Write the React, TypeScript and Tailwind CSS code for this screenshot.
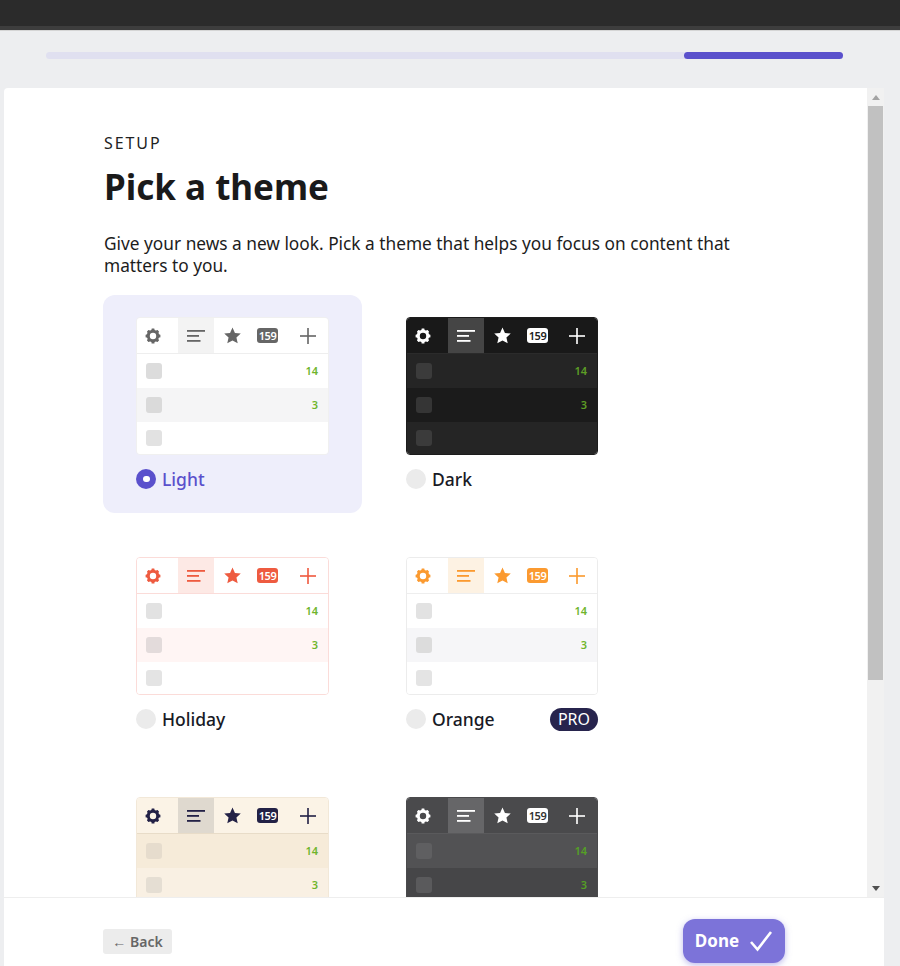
import React from "react";

type Theme = {
  name: string;
  header: string;
  tab: string;
  icon: string;
  badgeText: string;
  border: string;
  line: string;
  row1: string;
  row2: string;
  row3: string;
  cb1: string;
  cb2: string;
  cb3: string;
  green: string;
};

const themes: Theme[] = [
  { name: "Light", header: "bg-white", tab: "bg-[#f3f3f3]", icon: "#666666", badgeText: "text-white", border: "border-[#f0f0f0]", line: "border-[#eeeeee]", row1: "bg-white", row2: "bg-[#f5f5f6]", row3: "bg-white", cb1: "bg-[#dcdcdc]", cb2: "bg-[#dadada]", cb3: "bg-[#e2e2e2]", green: "text-[#6fb52c]" },
  { name: "Dark", header: "bg-[#191919]", tab: "bg-[#454545]", icon: "#ffffff", badgeText: "text-[#222222]", border: "border-[#1c1c1c]", line: "border-[#2b2b2b]", row1: "bg-[#252525]", row2: "bg-[#1b1b1b]", row3: "bg-[#252525]", cb1: "bg-[#3b3b3b]", cb2: "bg-[#353535]", cb3: "bg-[#3b3b3b]", green: "text-[#5d9e25]" },
  { name: "Holiday", header: "bg-white", tab: "bg-[#fde9e5]", icon: "#ee5b40", badgeText: "text-white", border: "border-[#fbdcd9]", line: "border-[#fbdcd9]", row1: "bg-white", row2: "bg-[#fff5f4]", row3: "bg-white", cb1: "bg-[#e2e2e2]", cb2: "bg-[#e3dbdb]", cb3: "bg-[#e4e4e4]", green: "text-[#6fb52c]" },
  { name: "Orange", header: "bg-white", tab: "bg-[#fdf2e3]", icon: "#fb9a30", badgeText: "text-white", border: "border-[#ececec]", line: "border-[#eeeeee]", row1: "bg-white", row2: "bg-[#f6f6f8]", row3: "bg-white", cb1: "bg-[#e2e2e2]", cb2: "bg-[#dcdcdc]", cb3: "bg-[#e4e4e4]", green: "text-[#6fb52c]" },
  { name: "", header: "bg-[#fbf3e6]", tab: "bg-[#dfd9cf]", icon: "#232146", badgeText: "text-white", border: "border-[#f2e8d8]", line: "border-[#e8dcc8]", row1: "bg-[#f6ebd9]", row2: "bg-[#f9f0e3]", row3: "bg-[#f6ebd9]", cb1: "bg-[#e6dccd]", cb2: "bg-[#e5ded3]", cb3: "bg-[#e6dccd]", green: "text-[#6fb52c]" },
  { name: "", header: "bg-[#4a4a4c]", tab: "bg-[#666668]", icon: "#ffffff", badgeText: "text-[#333333]", border: "border-[#4a4a4c]", line: "border-[#5a5a5c]", row1: "bg-[#525254]", row2: "bg-[#464648]", row3: "bg-[#525254]", cb1: "bg-[#5f5f61]", cb2: "bg-[#5a5a5c]", cb3: "bg-[#5f5f61]", green: "text-[#55a025]" },
];

function Gear({ color }: { color: string }) {
  return (
    <svg width="16" height="16" viewBox="0 0 16 16">
      <circle cx="8" cy="8" r="4.7" fill="none" stroke={color} strokeWidth="3" />
      {[0, 45, 90, 135, 180, 225, 270, 315].map((a) => (
        <rect key={a} x="6.5" y="0.6" width="3" height="2.6" rx="0.5" fill={color} transform={`rotate(${a} 8 8)`} />
      ))}
    </svg>
  );
}

function Lines({ color }: { color: string }) {
  return (
    <svg width="18" height="12" viewBox="0 0 18 12">
      <rect x="0" y="0" width="18" height="1.8" fill={color} />
      <rect x="0" y="5" width="12" height="1.8" fill={color} />
      <rect x="0" y="10" width="13.5" height="1.8" fill={color} />
    </svg>
  );
}

function Star({ color }: { color: string }) {
  return (
    <svg width="17" height="17" viewBox="0 0 16 16">
      <path d="M8 0.5l2.3 5.1 5.5.6-4.1 3.7 1.2 5.5L8 12.6l-4.9 2.8 1.2-5.5L.2 6.2l5.5-.6z" fill={color} />
    </svg>
  );
}

function Plus({ color }: { color: string }) {
  return (
    <svg width="16" height="16" viewBox="0 0 16 16">
      <rect x="7.1" y="0" width="1.8" height="16" fill={color} opacity="0.9" />
      <rect x="0" y="7.1" width="16" height="1.8" fill={color} opacity="0.9" />
    </svg>
  );
}

function Preview({ t, wide }: { t: Theme; wide: boolean }) {
  const rows = [
    { bg: t.row1, cb: t.cb1, n: "14", h: "h-[34px]" },
    { bg: t.row2, cb: t.cb2, n: "3", h: "h-[34px]" },
    { bg: t.row3, cb: t.cb3, n: "", h: "h-[32px]" },
  ];
  return (
    <div className={`${wide ? "w-[193px]" : "w-[192px]"} h-[138px] shrink-0 rounded-[4px] border overflow-hidden ${t.border}`}>
      <div className={`flex h-[36px] border-b ${t.header} ${t.line}`}>
        <div className="w-[41px] flex items-center justify-center pr-[9px]">
          <Gear color={t.icon} />
        </div>
        <div className={`w-[36px] flex items-center justify-center ${t.tab}`}>
          <Lines color={t.icon} />
        </div>
        <div className="w-[36px] flex items-center justify-center">
          <Star color={t.icon} />
        </div>
        <div className="w-[35px] flex items-center justify-center">
          <div
            className={`w-[21px] h-[15px] rounded-[3px] flex items-center justify-center text-[11px] font-semibold leading-none tracking-[-0.04em] ${t.badgeText}`}
            style={{ backgroundColor: t.icon }}
          >
            159
          </div>
        </div>
        <div className="flex-1 flex items-center justify-center pl-[2px]">
          <Plus color={t.icon} />
        </div>
      </div>
      {rows.map((r, i) => (
        <div key={i} className={`flex items-center justify-between pl-[9px] pr-[10px] ${r.bg} ${r.h}`}>
          <div className={`w-[16px] h-[16px] rounded-[3px] ${r.cb}`} />
          <span className={`text-[11px] font-semibold ${t.green}`}>{r.n}</span>
        </div>
      ))}
    </div>
  );
}

function ThemeCard({ t, selected, pro, wide }: { t: Theme; selected?: boolean; pro?: boolean; wide: boolean }) {
  return (
    <div className={`w-[259px] h-[218px] px-[33px] pt-[22px] rounded-[12px] ${selected ? "bg-[#eeeefb]" : ""}`}>
      <Preview t={t} wide={wide} />
      {t.name && (
        <div className={`flex items-center mt-[13px] h-[22px] ${wide ? "w-[193px]" : "w-[192px]"}`}>
          {selected ? (
            <div className="w-[20px] h-[20px] rounded-full bg-[#5a50cc] flex items-center justify-center">
              <div className="w-[7px] h-[6px] rounded-full bg-white" />
            </div>
          ) : (
            <div className="w-[20px] h-[20px] rounded-full bg-[#ebebeb]" />
          )}
          <span className={`ml-[6px] text-[17.5px] font-medium ${selected ? "text-[#5a50cc]" : "text-[#181a25]"}`}>{t.name}</span>
          {pro && (
            <span className="ml-auto h-[23px] w-[48px] rounded-full bg-[#27244d] text-white text-[16px] font-normal flex items-center justify-center">
              PRO
            </span>
          )}
        </div>
      )}
    </div>
  );
}

export default function App() {
  return (
    <div
      className="w-[900px] h-[966px] overflow-hidden flex flex-col bg-[#edeef0]"
      style={{ fontFamily: '"Noto Sans", Roboto, sans-serif' }}
    >
      <div className="h-[30px] shrink-0 bg-[#2b2b2b] border-b-[4px] border-[#3d3d3d] shadow-[0_1px_0_#d5d5d5]" />
      <div className="shrink-0 h-[58px] pt-[22px] pl-[46px]">
        <div className="w-[797px] h-[7px] rounded-full bg-[#e0e0f0] flex justify-end">
          <div className="w-[159px] h-[7px] rounded-full bg-[#5a50cc]" />
        </div>
      </div>
      <div className="flex-1 min-h-0 ml-[4px] w-[880px] flex flex-col">
        <div className="flex-1 min-h-0 flex">
          <div className="w-[863px] bg-white rounded-tl-[4px] overflow-hidden pl-[99px]">
            <div className="pt-[43px] pl-[1px] text-[16px] leading-[24px] tracking-[0.12em] text-[#222222]">SETUP</div>
            <h1 className="mt-[10px] pl-[1px] text-[35px] leading-[44px] font-bold text-[#1a1a1a]">Pick a theme</h1>
            <p className="mt-[24px] pl-[1px] w-[650px] text-[17.3px] leading-[22px] text-[#1c1c1c]">
              Give your news a new look. Pick a theme that helps you focus on content that matters to you.
            </p>
            <div className="mt-[18px] grid grid-cols-[259px_259px] gap-x-[11px] gap-y-[22px]">
              {themes.map((t, i) => (
                <ThemeCard key={i} t={t} selected={i === 0} pro={i === 3} wide={i % 2 === 0} />
              ))}
            </div>
          </div>
          <div className="w-[17px] bg-[#f1f1f1] flex flex-col items-center">
            <div className="h-[18px] flex items-center justify-center">
              <div className="w-0 h-0 border-x-[4px] border-x-transparent border-b-[5px] border-b-[#a3a3a3]" />
            </div>
            <div className="w-[15px] h-[574px] bg-[#c1c1c1]" />
            <div className="flex-1" />
            <div className="h-[18px] flex items-center justify-center">
              <div className="w-0 h-0 border-x-[4px] border-x-transparent border-t-[5px] border-t-[#505050]" />
            </div>
          </div>
        </div>
        <div className="h-[69px] shrink-0 bg-white border-t border-[#eeeeee] flex items-start pl-[99px]">
          <button className="mt-[31px] h-[25px] w-[69px] rounded-[3px] bg-[#ececec] text-[#666666] text-[14px] font-semibold flex items-center justify-center">
            ← Back
          </button>
          <button className="mt-[21px] ml-[511px] h-[44px] w-[102px] rounded-[12px] bg-[#7c73d9] shadow-[0_2px_6px_rgba(124,115,217,0.5)] text-white text-[17px] font-bold flex items-center justify-center gap-[10px]">
            Done
            <svg width="24" height="22" viewBox="0 0 24 22">
              <path d="M2 12l6.5 7.5L22 2" fill="none" stroke="white" strokeWidth="2.6" />
            </svg>
          </button>
        </div>
      </div>
    </div>
  );
}
